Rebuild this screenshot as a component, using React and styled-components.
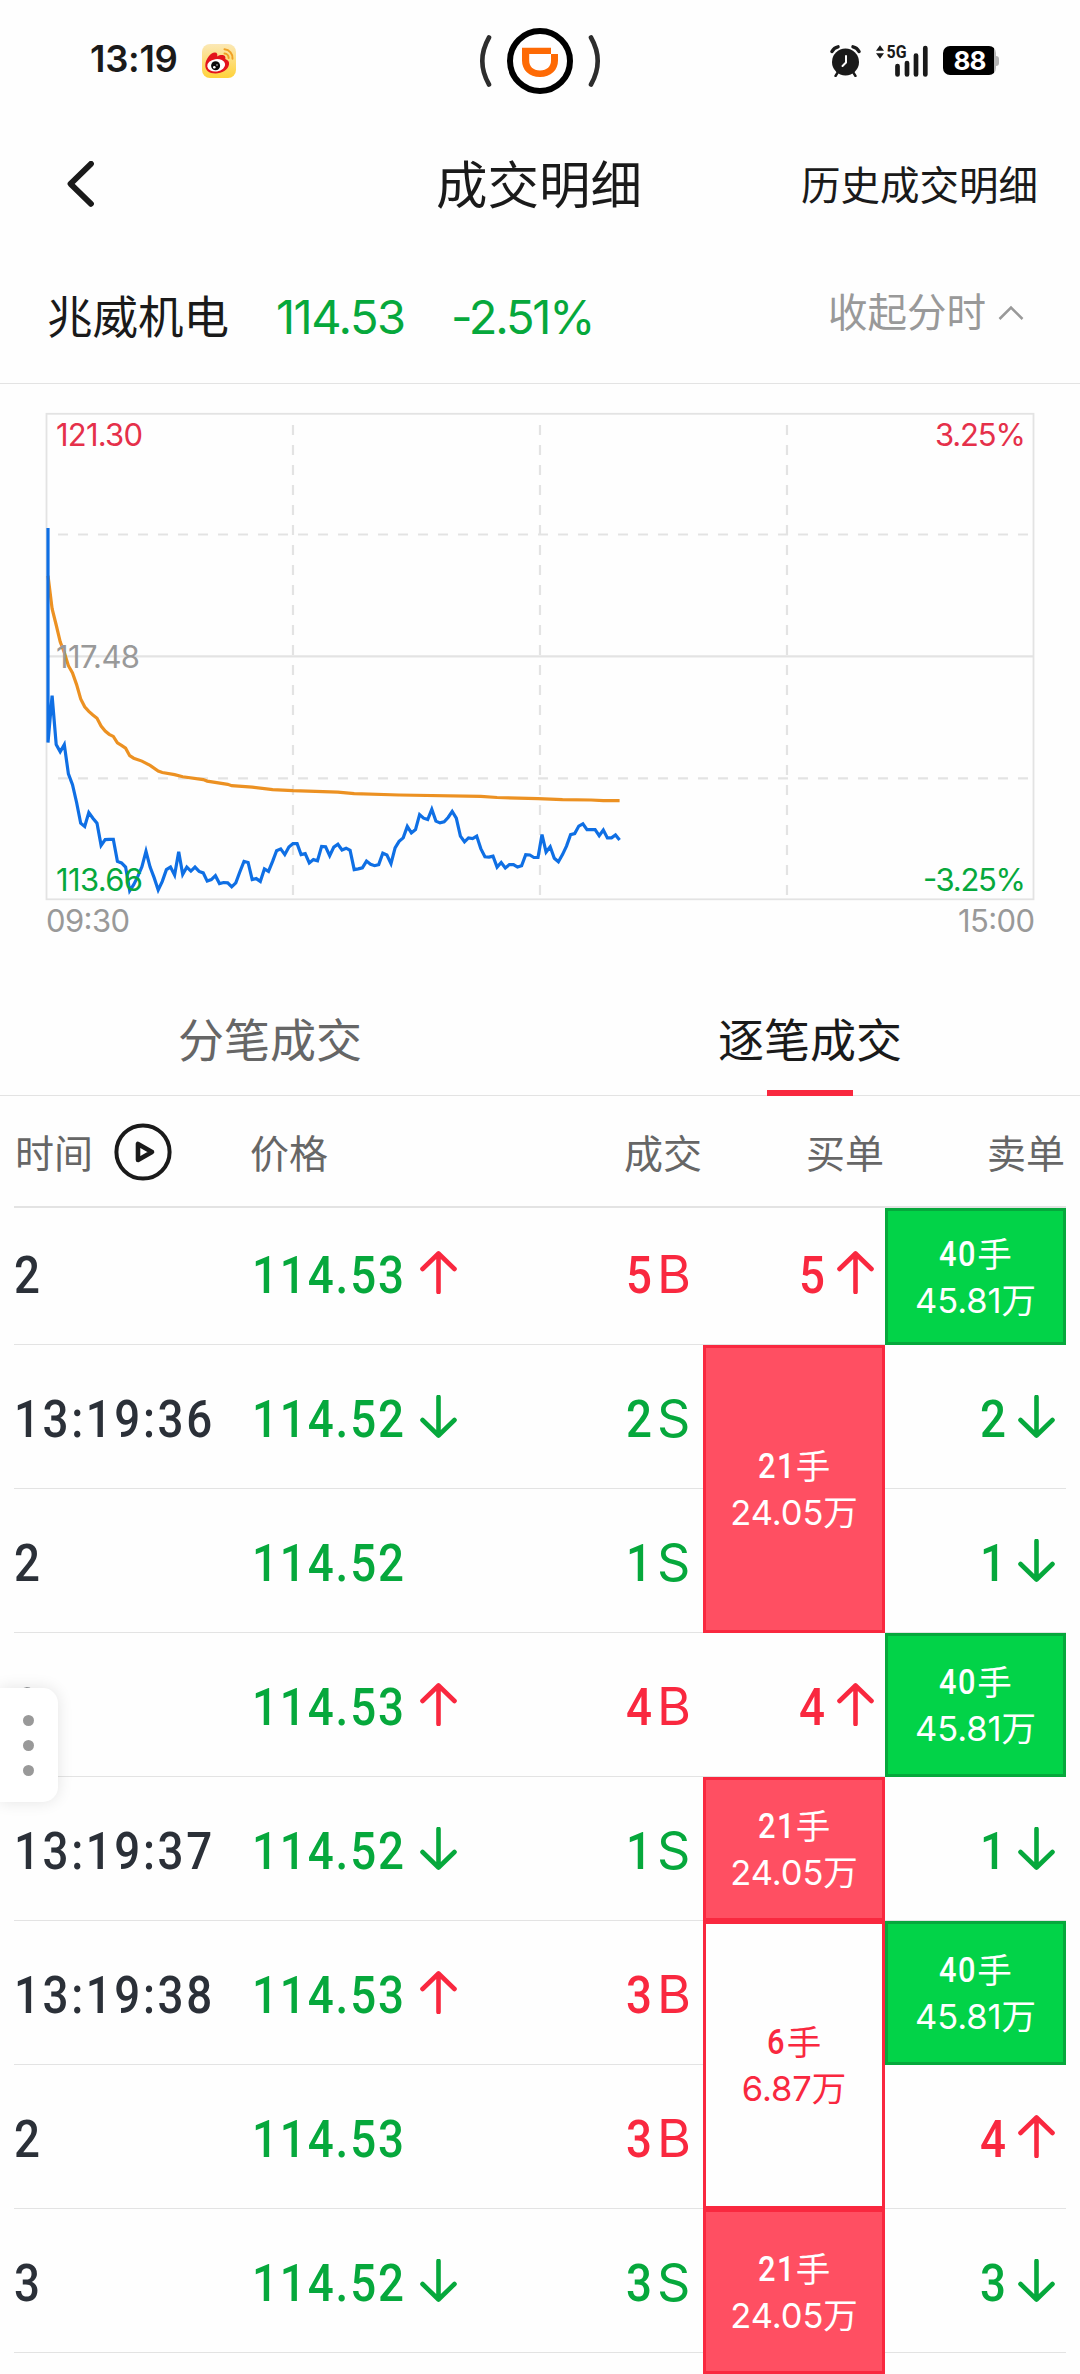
import React from "react";
import styled, { createGlobalStyle } from "styled-components";

const RED = "#f9283f";
const GREEN = "#06a83c";
const LINE = "#e3e3e3";

const GlobalStyle = createGlobalStyle`
  * {
    box-sizing:border-box;
  }
  body {
    margin:0;
    background-color:#fefefe;
    color:#1a1a1a;
    font-family:Inter, "Noto Sans CJK SC", sans-serif;
  }
`;

const Container = styled.div`
  width:1080px;
  height:2374px;
  overflow:hidden;
  display:flex;
  flex-direction:column;
`;

const StatusBar = styled.div`
  height:122px;
  display:grid;
  grid-template-columns:1fr 120px 1fr;
  align-items:center;
`;

const StatusLeft = styled.div`
  display:flex;
  align-items:center;
  padding-left:90px;
  gap:24px;
`;

const Clock = styled.span`
  width:88px;
  font-size:36.5px;
  font-weight:600;
  line-height:40px;
  letter-spacing:-0.3px;
  margin-top:-4px;
  white-space:nowrap;
`;

const StatusRight = styled.div`
  display:flex;
  align-items:center;
  justify-content:flex-end;
  padding-right:81px;
  gap:15px;
`;

const Battery = styled.div`
  display:flex;
  align-items:center;
  width:56px;
  margin-top:-1px;
`;

const BatteryBody = styled.div`
  width:53px;
  height:29px;
  border-radius:7px;
  background:linear-gradient(to right, #000 51px, #b5b5b5 51px);
  color:white;
  font-size:26px;
  font-weight:700;
  line-height:30px;
  text-align:center;
  letter-spacing:-1px;
`;

const BatteryTip = styled.div`
  width:3px;
  height:10px;
  border-radius:0 3px 3px 0;
  background-color:#b5b5b5;
`;

const NavBar = styled.div`
  height:126px;
  display:grid;
  grid-template-columns:370px 1fr auto;
  align-items:center;
  padding:0 42px 0 66px;
`;

const Title = styled.h1`
  margin:0;
  font-size:51.5px;
  font-weight:400;
  line-height:60px;
  white-space:nowrap;
`;

const NavLink = styled.span`
  font-size:39.5px;
  line-height:48px;
  margin-top:1px;
  white-space:nowrap;
`;

const Quote = styled.div`
  height:136px;
  display:flex;
  align-items:center;
  padding:2px 56px 0 47px;
  border-bottom:1px solid ${LINE};
`;

const StockName = styled.span`
  width:229px;
  margin-top:2px;
  font-size:45.5px;
  line-height:56px;
`;

const QuoteValue = styled.span`
  width:${props => props.$width}px;
  color:${GREEN};
  font-size:47px;
  line-height:56px;
  letter-spacing:${props => props.$spacing}px;
  white-space:nowrap;
`;

const Collapse = styled.span`
  display:flex;
  align-items:center;
  gap:12px;
  margin-left:auto;
  margin-top:-7px;
  color:#999;
  font-size:39.5px;
  line-height:48px;
`;

const ChartBox = styled.div`
  height:600px;
`;

const Tabs = styled.div`
  height:112px;
  display:flex;
  border-bottom:1px solid ${LINE};
`;

const Tab = styled.div`
  flex:1;
  display:flex;
  flex-direction:column;
  align-items:center;
  font-size:46px;
  line-height:56px;
  padding-top:28px;
  color:${props => props.$active ? "#1a1a1a" : "#666"};
`;

const TabMark = styled.div`
  flex:none;
  width:86px;
  height:6px;
  margin-top:22px;
  background-color:${RED};
`;

const columns = "238px 1fr 160px 182px 181px";

const TableHead = styled.div`
  display:grid;
  grid-template-columns:${columns};
  align-items:center;
  height:112px;
  margin:0 14px;
  padding-top:6px;
  border-bottom:2px solid ${LINE};
  color:#666;
  font-size:39px;
  line-height:48px;
`;

const HeadCell = styled.div`
  display:flex;
  align-items:center;
  gap:21px;
  justify-content:${props => props.$right ? "flex-end" : "flex-start"};
  margin-left:${props => props.$shift || 0}px;
  padding-right:${props => props.$right ? 1 : 0}px;

  svg {
    margin-top:-4px;
  }
`;

// first and last rows are cut by the scroll area
const TableBody = styled.div`
  display:grid;
  grid-template-columns:${columns};
  grid-template-rows:137px repeat(7, 144px) 21px;
  margin:0 14px;
`;

const Cell = styled.div`
  grid-row:${props => props.$row};
  grid-column:${props => props.$col};
  align-self:end;
  height:144px;
  display:flex;
  align-items:center;
  justify-content:${props => props.$right ? "flex-end" : "flex-start"};
  padding:4px ${props => props.$right ? 11 : 0}px 0 0;
  border-bottom:1px solid ${LINE};
  color:${props => props.$color || "#2b3038"};
  line-height:60px;
  white-space:nowrap;

  svg {
    margin:-4px 0 0 13px;
    flex:none;
  }
`;

// condensed digits, the box is as wide as the squeezed text
const Digits = styled.span`
  display:block;
  width:${props => props.$width}px;
  font-family:Roboto, sans-serif;
  font-size:52.5px;
  font-weight:500;
  letter-spacing:${props => props.$spacing || 2.2}px;
  transform:scaleX(0.87);
  transform-origin:left;
`;

const Side = styled.span`
  width:33px;
  margin:0 2px 0 6px;
  font-size:52px;
  text-align:center;
`;

const Order = styled.div`
  grid-row:${props => props.$row} / span ${props => props.$span};
  grid-column:${props => props.$side === "buy" ? 4 : 5};
  display:flex;
  flex-direction:column;
  align-items:center;
  justify-content:center;
  z-index:1;
  padding-top:2px;
  border:3px solid ${props => props.$side === "buy" ? RED : GREEN};
  background-color:${props => props.$hollow ? "#fefefe" : props.$side === "buy" ? "#ff4f62" : "#02d348"};
  color:${props => props.$hollow ? RED : "white"};
  font-size:34.5px;
  line-height:46px;
`;

const Lots = styled.span`
  display:flex;
  gap:1px;
`;

const LotDigits = styled.span`
  width:${props => props.$width}px;
  font-family:Roboto, sans-serif;
  font-size:35px;
  font-weight:500;
  letter-spacing:1.6px;
  transform:scaleX(0.88);
  transform-origin:left;
`;

const Amount = styled.span`
  letter-spacing:-0.1px;
`;

const Handle = styled.div`
  position:absolute;
  left:0;
  top:1688px;
  width:58px;
  height:114px;
  z-index:2;
  display:flex;
  flex-direction:column;
  align-items:center;
  justify-content:center;
  gap:14px;
  padding-right:2px;
  border-radius:0 15px 15px 0;
  background-color:white;
  box-shadow:0 0 16px rgba(0, 0, 0, 0.11);
`;

const Dot = styled.i`
  width:11px;
  height:11px;
  border-radius:50%;
  background-color:#999;
`;

const prices = [
    987, 856, 993, 1013, 993, 1075, 1105, 1155, 1213, 1222, 1183, 1199, 1213, 1275, 1259, 1258, 1258, 1320, 1324, 1336,
    1402, 1385, 1362, 1335, 1292, 1336, 1366, 1400, 1376, 1343, 1336, 1358, 1293, 1356, 1336, 1347, 1336, 1348, 1352, 1375,
    1371, 1360, 1382, 1379, 1380, 1391, 1380, 1349, 1320, 1323, 1371, 1368, 1376, 1341, 1348, 1320, 1290, 1285, 1301, 1280,
    1270, 1270, 1301, 1298, 1324, 1315, 1318, 1278, 1279, 1304, 1280, 1272, 1288, 1283, 1289, 1343, 1341, 1338, 1319, 1328,
    1332, 1329, 1297, 1302, 1326, 1282, 1264, 1254, 1222, 1240, 1231, 1189, 1199, 1203, 1174, 1207, 1212, 1209, 1197, 1180,
    1199, 1249, 1265, 1254, 1256, 1249, 1284, 1307, 1308, 1305, 1336, 1323, 1338, 1329, 1329, 1336, 1332, 1301, 1302, 1309,
    1309, 1245, 1294, 1279, 1311, 1321, 1301, 1277, 1245, 1242, 1221, 1215, 1231, 1231, 1231, 1248, 1232, 1254, 1254, 1246, 1260,
];

const average = [
    [0, 520], [1, 612], [2, 658], [3, 705], [4, 735], [5, 772], [6, 792], [7, 825], [8, 865], [9, 887], [10, 900],
    [11, 910], [12, 919], [13, 941], [14, 955], [15, 964], [16, 970], [17, 988], [18, 995], [19, 1003], [20, 1024],
    [21, 1031], [23, 1039], [25, 1051], [27, 1067], [28, 1071], [31, 1077], [33, 1083], [38, 1091], [39, 1095],
    [44, 1104], [45, 1108], [50, 1112], [55, 1119], [60, 1122], [71, 1126], [75, 1130], [86, 1134], [106, 1138],
    [110, 1141], [120, 1144], [126, 1147], [133, 1148], [136, 1150], [140, 1150],
];

const toX = minute => (48 + minute * 4.083).toFixed(1);
const toY = level => (level / 2.8 + 6).toFixed(1);

const Chart = () => {
    const priceLine = prices.map((p, i) => `${toX(i)},${toY(p)}`).join(" ");
    const averageLine = average.map(([m, p]) => `${toX(m)},${toY(p)}`).join(" ");
    return (
        <svg width="1080" height="600" viewBox="0 0 1080 600" fontFamily="Inter, sans-serif" fontSize="31">
            <g stroke={LINE} strokeWidth="1.8" fill="none">
                <rect x="46.5" y="29.8" width="987" height="485.5" />
                <path d="M47 272.4H1033" strokeWidth="2.2" />
                <path d="M58 150.5H1033M58 394.3H1033" strokeDasharray="10 10" strokeWidth="2.2" />
                <path d="M293 41V515M540 41V515M787 41V515" strokeDasharray="10 10" strokeWidth="2.2" />
            </g>
            <polyline points={averageLine} fill="none" stroke="#ec9122" strokeWidth="3.2" />
            <polyline points={`48,${toY(386)} ${priceLine}`} fill="none" stroke="#0f6fe4" strokeWidth="3.2" />
            <g fill="#e5304a">
                <text x="56" y="61.5" textLength="87">121.30</text>
                <text x="935" y="61.5" textLength="91">3.25%</text>
            </g>
            <g fill={GREEN}>
                <text x="56" y="506.5" textLength="87">113.66</text>
                <text x="923" y="506.5" textLength="103">-3.25%</text>
            </g>
            <g fill="#999">
                <text x="56" y="283.5" textLength="84">117.48</text>
                <text x="46" y="548" textLength="84">09:30</text>
                <text x="958" y="548" textLength="77">15:00</text>
            </g>
        </svg>
    )
}

const WeiboIcon = () => (
    <svg width="34" height="34" viewBox="0 0 34 34">
        <defs>
            <linearGradient id="weibo" x1="0" y1="0" x2="0" y2="1">
                <stop offset="0" stopColor="#fbe8b6" />
                <stop offset="1" stopColor="#ffd23a" />
            </linearGradient>
        </defs>
        <rect width="34" height="34" rx="8" fill="url(#weibo)" />
        <path d="M3.3 21C3.5 15 9 8.4 13 8.6c2.2 0 2.7 1.8 2.2 3.8C19 10 24.5 10.5 23.3 15c2.7 1 4.2 2.7 3.7 5.5C26 26 20 29.5 13.5 29.5S3 26 3.3 21z" fill="#e3141c" />
        <ellipse cx="14.2" cy="21.3" rx="9" ry="6.2" fill="#fff" transform="rotate(-8 14.2 21.3)" />
        <circle cx="13.6" cy="21.8" r="4.5" fill="#0a0a0a" />
        <circle cx="12.3" cy="23.2" r="1.3" fill="#fff" />
        <circle cx="15" cy="21" r="0.7" fill="#fff" />
        <path d="M22.5 5.3a8.5 8.5 0 0 1 8 9.4M22.5 9.4a4.6 4.6 0 0 1 4.2 4.6" fill="none" stroke="#f0a024" strokeWidth="2" strokeLinecap="round" />
    </svg>
)

const DidiIsland = () => (
    <svg width="120" height="68" viewBox="480 27 120 68" overflow="visible">
        <circle cx="540" cy="61" r="30" fill="#fff" stroke="#000" strokeWidth="6" />
        <path d="M489 37.5Q475.6 61 489 84.5M591 37.5Q604.4 61 591 84.5" fill="none" stroke="#2d2d2d" strokeWidth="4.6" strokeLinecap="round" />
        <path fillRule="evenodd" fill="#fe6a05" d="M522 47.7H551V54H558V60.5C558 70 551 77 540 77S522 70 522 60.5zM529.2 54V60.5C529.2 66.5 533 70.4 540 70.4S551 66.5 551 60.5V54z" />
    </svg>
)

const AlarmIcon = () => (
    <svg width="31" height="32" viewBox="0 0 31 32">
        <circle cx="15.5" cy="17" r="13.5" fill="#1a1a1a" />
        <path d="M2 6.5Q4 2.5 8 1.8M29 6.5Q27 2.5 23 1.8" stroke="#1a1a1a" strokeWidth="3.4" strokeLinecap="round" fill="none" />
        <path d="M8 27L5.5 31M23 27l2.5 4" stroke="#1a1a1a" strokeWidth="2.4" strokeLinecap="round" />
        <path d="M16 11V17.5L12.5 21" stroke="#fff" strokeWidth="2" strokeLinecap="round" strokeLinejoin="round" fill="none" />
    </svg>
)

const SignalIcon = () => (
    <svg width="52" height="44" viewBox="0 -6 52 44">
        <path d="M0 5.8L4 0.3L8 5.8zM0 8.2H8L4 13.7z" fill="#1a1a1a" />
        <text x="10.5" y="13.2" fontFamily="Roboto, sans-serif" fontSize="18" fontWeight="700" textLength="20" lengthAdjust="spacingAndGlyphs" fill="#1a1a1a">5G</text>
        <path d="M21.5 21V29.5M31 18V29.5M40 10.5V29.5M49.3 3V29.5" stroke="#1a1a1a" strokeWidth="4.7" strokeLinecap="round" />
    </svg>
)

const PlayIcon = () => (
    <svg width="58" height="58" viewBox="0 0 58 58" fill="none" stroke="#1a1a1a" strokeLinejoin="round">
        <circle cx="29" cy="29" r="26.6" strokeWidth="4" />
        <path d="M24 21V37L38 29z" strokeWidth="4.6" />
    </svg>
)

const Arrow = ({ up }) => (
    <svg width="37" height="43" viewBox="0 0 37 43" fill="none" stroke={up ? RED : GREEN} strokeWidth="4.6" strokeLinecap="round" strokeLinejoin="round">
        {up
            ? <path d="M18.5 41V2.5M2.5 18L18.5 2.5L34.5 18" />
            : <path d="M18.5 2V40.5M2.5 25L18.5 40.5L34.5 25" />}
    </svg>
)

const trades = [
    { time: "2", price: "114.53", move: "up", lots: 5, side: "B", buy: [5, "up"] },
    { time: "13:19:36", price: "114.52", move: "down", lots: 2, side: "S", sell: [2, "down"] },
    { time: "2", price: "114.52", lots: 1, side: "S", sell: [1, "down"] },
    { time: "2", price: "114.53", move: "up", lots: 4, side: "B", buy: [4, "up"] },
    { time: "13:19:37", price: "114.52", move: "down", lots: 1, side: "S", sell: [1, "down"] },
    { time: "13:19:38", price: "114.53", move: "up", lots: 3, side: "B" },
    { time: "2", price: "114.53", lots: 3, side: "B", sell: [4, "up"] },
    { time: "3", price: "114.52", move: "down", lots: 3, side: "S", sell: [3, "down"] },
];

const orders = [
    { side: "sell", row: 1, span: 1, lots: 40, amount: "45.81" },
    { side: "buy", row: 2, span: 2, lots: 21, amount: "24.05" },
    { side: "sell", row: 4, span: 1, lots: 40, amount: "45.81" },
    { side: "buy", row: 5, span: 1, lots: 21, amount: "24.05" },
    { side: "buy", row: 6, span: 2, lots: 6, amount: "6.87", hollow: true },
    { side: "sell", row: 6, span: 1, lots: 40, amount: "45.81" },
    { side: "buy", row: 8, span: 2, lots: 21, amount: "24.05" },
];

const OrderCell = ({ row, col, order }) => {
    const [lots, move] = order;
    return (
        <Cell $row={row} $col={col} $right $color={move === "up" ? RED : GREEN}>
            <Digits $width={25}>{lots}</Digits>
            <Arrow up={move === "up"} />
        </Cell>
    )
}

const TradeRow = ({ trade, row }) => {
    return (
        <>
            <Cell $row={row} $col={1}>
                <Digits $width={200} $spacing={3}>{trade.time}</Digits>
            </Cell>
            <Cell $row={row} $col={2} $color={GREEN}>
                <Digits $width={155}>{trade.price}</Digits>
                {trade.move && <Arrow up={trade.move === "up"} />}
            </Cell>
            <Cell $row={row} $col={3} $right $color={trade.side === "B" ? RED : GREEN}>
                <Digits $width={25}>{trade.lots}</Digits>
                <Side>{trade.side}</Side>
            </Cell>
            {trade.buy && <OrderCell row={row} col={4} order={trade.buy} />}
            {trade.sell && <OrderCell row={row} col={5} order={trade.sell} />}
        </>
    )
}

const App = () => {
    return (
        <Container>
            <GlobalStyle />
            <StatusBar>
                <StatusLeft>
                    <Clock>13:19</Clock>
                    <WeiboIcon />
                </StatusLeft>
                <DidiIsland />
                <StatusRight>
                    <AlarmIcon />
                    <SignalIcon />
                    <Battery>
                        <BatteryBody>88</BatteryBody>
                        <BatteryTip />
                    </Battery>
                </StatusRight>
            </StatusBar>
            <NavBar>
                <svg width="30" height="48" viewBox="0 0 30 48" fill="none" stroke="#1a1a1a" strokeWidth="5.8" strokeLinecap="round" strokeLinejoin="round">
                    <path d="M25 2.8L4.5 22.8L25 42.8" />
                </svg>
                <Title>成交明细</Title>
                <NavLink>历史成交明细</NavLink>
            </NavBar>
            <Quote>
                <StockName>兆威机电</StockName>
                <QuoteValue $width={175} $spacing={-1.5}>114.53</QuoteValue>
                <QuoteValue $width={150} $spacing={-2.2}>-2.51%</QuoteValue>
                <Collapse>
                    收起分时
                    <svg width="26" height="16" viewBox="0 0 26 16" fill="none" stroke="#999" strokeWidth="2.5">
                        <path d="M1.5 14L13 2.5L24.5 14" />
                    </svg>
                </Collapse>
            </Quote>
            <ChartBox>
                <Chart />
            </ChartBox>
            <Tabs>
                <Tab>分笔成交</Tab>
                <Tab $active>
                    逐笔成交
                    <TabMark />
                </Tab>
            </Tabs>
            <TableHead>
                <HeadCell $shift={1}>时间<PlayIcon /></HeadCell>
                <HeadCell $shift={-2}>价格</HeadCell>
                <HeadCell $right>成交</HeadCell>
                <HeadCell $right>买单</HeadCell>
                <HeadCell $right>卖单</HeadCell>
            </TableHead>
            <TableBody>
                {trades.map((trade, i) => (
                    <TradeRow key={i} trade={trade} row={i + 1} />
                ))}
                {orders.map((order, i) => (
                    <Order key={i} $side={order.side} $row={order.row} $span={order.span} $hollow={order.hollow}>
                        <Lots>
                            <LotDigits $width={order.lots > 9 ? 37 : 19}>{order.lots}</LotDigits>
                            手
                        </Lots>
                        <Amount>{order.amount}万</Amount>
                    </Order>
                ))}
            </TableBody>
            <Handle>
                <Dot />
                <Dot />
                <Dot />
            </Handle>
        </Container>
    )
}

export default App
